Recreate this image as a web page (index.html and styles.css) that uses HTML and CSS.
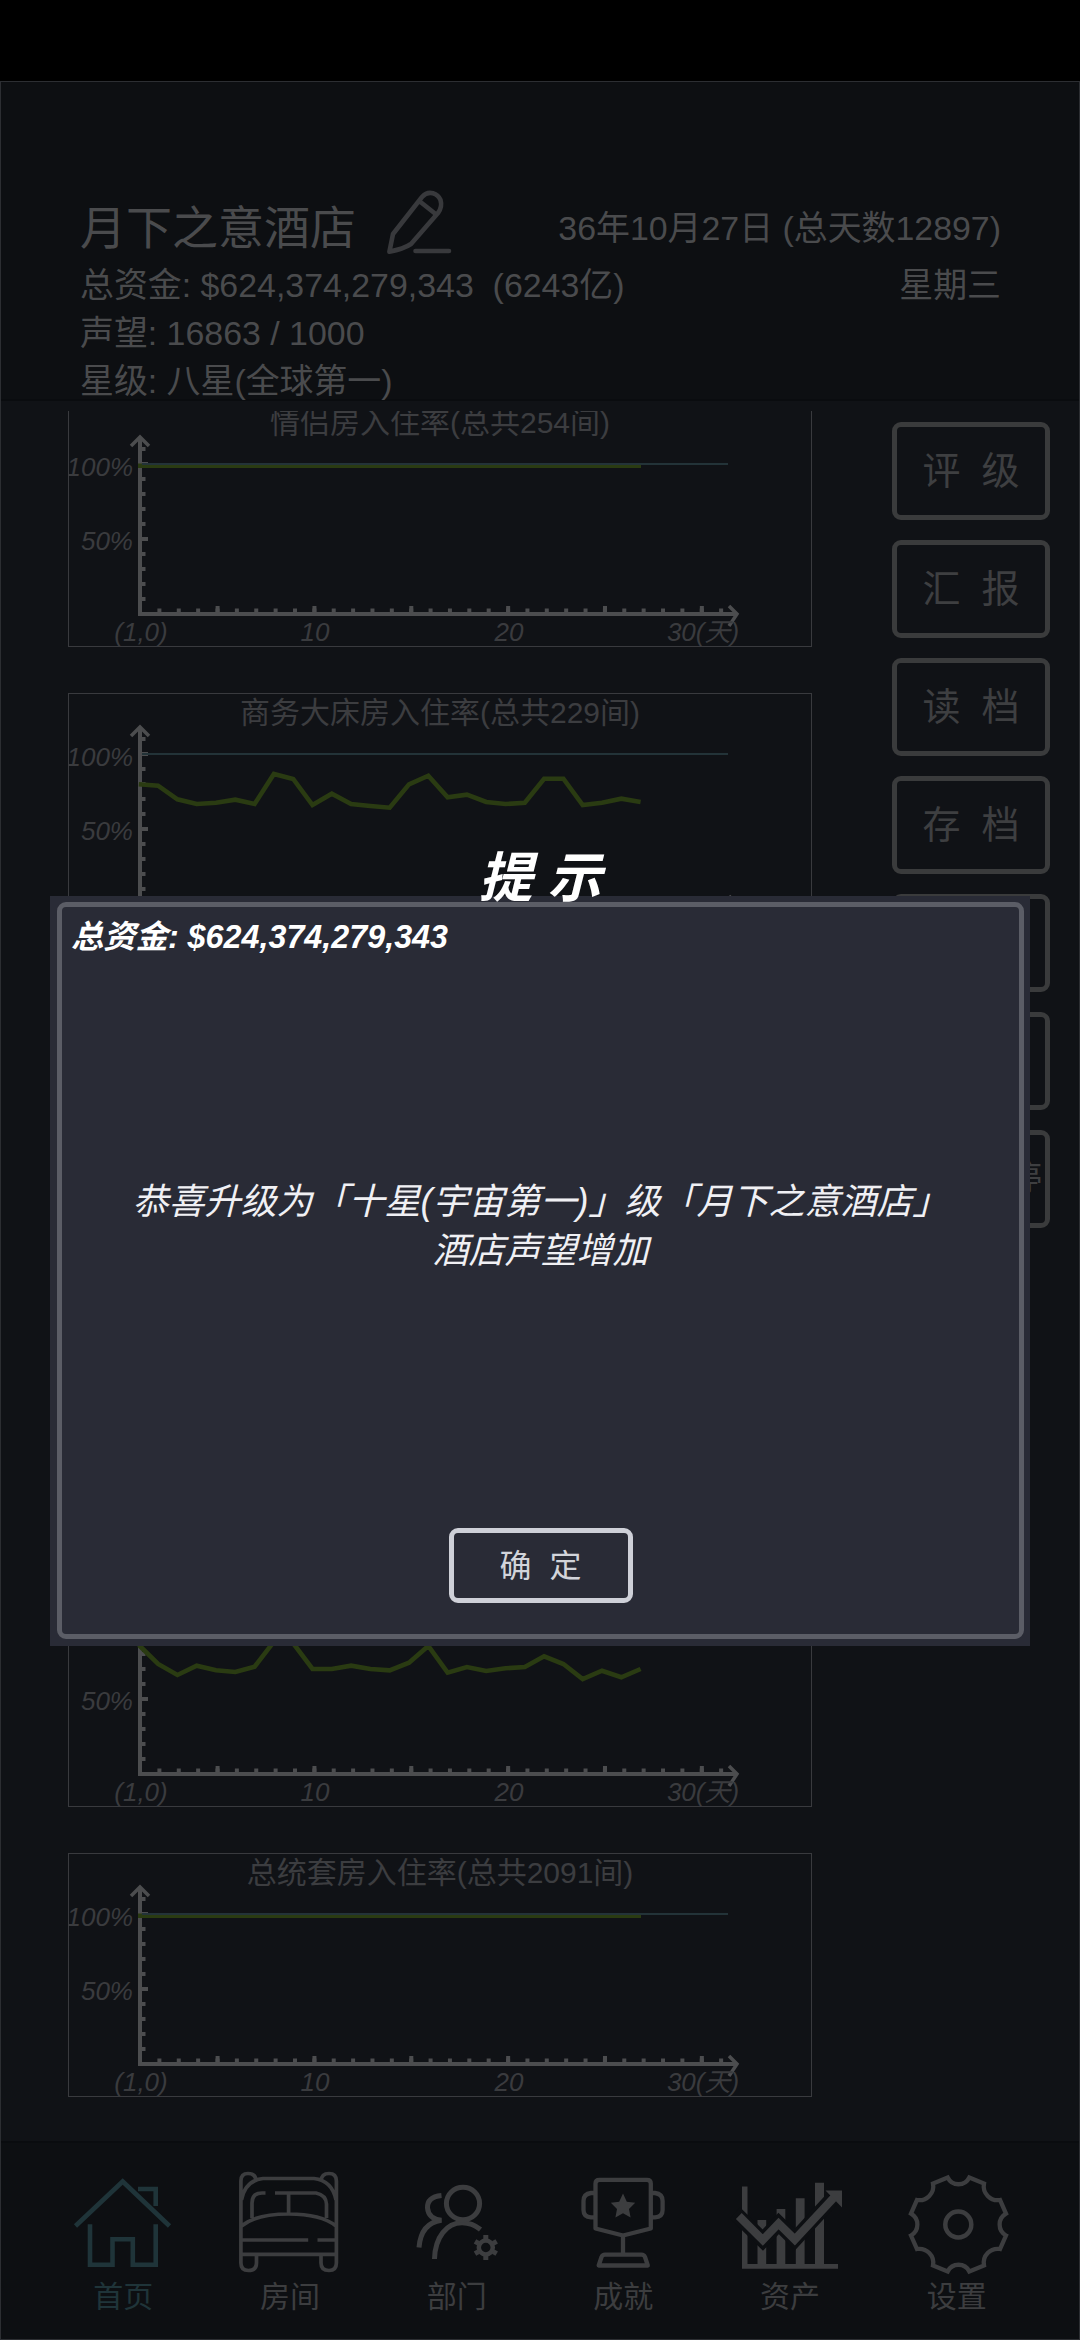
FILE: index.html
```html
<!DOCTYPE html>
<html lang="zh-CN">
<head>
<meta charset="utf-8">
<title>月下之意酒店</title>
<link rel="stylesheet" href="styles.css">
</head>
<body>
<svg class="defs" aria-hidden="true">
  <symbol id="axes" viewBox="0 0 744 244">
    <g class="axis">
      <path d="M72 213V35M70 211H669"/>
      <path d="M63 43L72 34L81 43M661 203L669 211L661 223" stroke-width="3.5"/>
      <path d="M75.5 198V44" stroke-width="4" stroke-dasharray="4 11"/>
      <path d="M74 136H80M74 61H80"/>
      <path d="M89.4 207.5H664" stroke-width="4" stroke-dasharray="4 15.37"/>
      <path d="M147.6 206H644" stroke-width="6" stroke-dasharray="4 92.85"/>
    </g>
  </symbol>
</svg>

<div class="app">
  <header class="header">
    <div class="row row-title">
      <h1 class="hotel">月下之意酒店</h1>
      <svg class="pencil" viewBox="0 0 75 75">
        <path d="M8.4 66.7L12 49L41 12C48 4 57 9 59.5 15C61 20 60 24 57 28L30 59C24 63 17 65 8.4 66.7ZM39.5 17L54 28.5M34.5 66H68"/>
      </svg>
      <span class="date">36年10月27日 (总天数12897)</span>
    </div>
    <div class="row"><span>总资金: $624,374,279,343&nbsp; (6243亿)</span><span>星期三</span></div>
    <div class="row">声望: 16863 / 1000</div>
    <div class="row">星级: 八星(全球第一)</div>
  </header>

  <main class="main">
    <section class="charts">
      <article class="chart">
        <h2>情侣房入住率(总共254间)</h2>
        <svg viewBox="0 0 744 244"><use href="#axes"/>
          <path class="rate" d="M70 62.7H573"/><path class="full" d="M74 61H660"/>
          <g class="label"><text x="65" y="73" class="end">100%</text><text x="65" y="147" class="end">50%</text><text x="73" y="238">(1,0)</text><text x="247" y="238">10</text><text x="441" y="238">20</text><text x="635" y="238">30(天)</text></g>
        </svg>
      </article>
      <article class="chart">
        <h2>商务大床房入住率(总共229间)</h2>
        <svg viewBox="0 0 744 244"><use href="#axes"/>
          <path class="full" d="M74 61H660"/>
          <polyline class="rate" points="70.8,91.3 90.1,92.7 109.4,106.3 128.7,111 148,109.7 167.3,106.7 186.6,111 205.9,81 225.2,86 244.5,112 263.8,100.7 283.1,111 302.4,113 321.7,114.7 341,91.3 360.3,82.7 379.6,104.3 398.9,101.7 418.2,109 437.5,111 456.8,109.7 476.1,85.7 495.4,85.7 514.7,112 534,109.7 553.3,105.7 572.6,109"/>
          <g class="label"><text x="65" y="73" class="end">100%</text><text x="65" y="147" class="end">50%</text></g>
        </svg>
      </article>
      <article class="chart"></article>
      <article class="chart"></article>
      <article class="chart">
        <svg viewBox="0 0 744 244"><use href="#axes"/>
          <polyline class="rate" points="70.8,82 90.1,101 109.4,112 128.7,102.7 148,107.3 167.3,109 186.6,103.7 205.9,78.7 225.2,80.3 244.5,106 263.8,106 283.1,102.7 302.4,106 321.7,107.3 341,99.7 360.3,83 379.6,109.7 398.9,104 418.2,108 437.5,105.3 456.8,104 476.1,93.3 495.4,101 514.7,116 534,107.7 553.3,114.3 572.6,106"/>
          <g class="label"><text x="65" y="147" class="end">50%</text><text x="73" y="238">(1,0)</text><text x="247" y="238">10</text><text x="441" y="238">20</text><text x="635" y="238">30(天)</text></g>
        </svg>
      </article>
      <article class="chart">
        <h2>总统套房入住率(总共2091间)</h2>
        <svg viewBox="0 0 744 244"><use href="#axes"/>
          <path class="rate" d="M70 62.7H573"/><path class="full" d="M74 61H660"/>
          <g class="label"><text x="65" y="73" class="end">100%</text><text x="65" y="147" class="end">50%</text><text x="73" y="238">(1,0)</text><text x="247" y="238">10</text><text x="441" y="238">20</text><text x="635" y="238">30(天)</text></g>
        </svg>
      </article>
    </section>
    <aside class="actions">
      <button>评&nbsp; 级</button>
      <button>汇&nbsp; 报</button>
      <button>读&nbsp; 档</button>
      <button>存&nbsp; 档</button>
      <button></button>
      <button></button>
      <button class="pause">停</button>
    </aside>
  </main>

  <nav class="nav">
    <a class="tab active">
      <svg viewBox="0 0 120 110"><path stroke-width="4.6" d="M12.5 61L59.7 16.5L106.5 61M75 24H92.7V41M27 59.3V99.7H49.5V74.3H69.8V99.7H92.7V59.3"/></svg>
      <span>首页</span>
    </a>
    <a class="tab">
      <svg viewBox="0 0 120 110"><path stroke-width="3.7" d="M10.9 97V16Q10.9 8.5 18 8.5Q25.7 8.5 26 16M91 16Q91.5 8.5 99 8.5Q106.4 8.5 106.4 16V97M11.5 35Q15 15.5 33 13.5H84Q102 15.5 106 35M10.9 89.3H106.4M10.9 89.3V98Q10.9 105.5 18.5 105.5Q26.5 105.5 26.5 98V89.3M91 89.3V98Q91 105.5 99 105.5Q106.4 105.5 106.4 98V89.3M10.9 75H78.2M87.5 75H106.4M11.5 61Q26 49 58.6 49Q91 49 106 61M22 53V38Q22 28 32 28H35.5M45 28H86Q96 30 96.5 39V53M58.6 28V49"/></svg>
      <span>房间</span>
    </a>
    <a class="tab">
      <svg viewBox="0 0 120 110"><path stroke-width="5" d="M44.5 30.5Q30 32 30.5 43Q31.5 54 44.5 55.3Q24 58 22 82.5M37.5 94C38 72 50 57.7 65 57.7C72 57.7 78 60 83.5 64.5"/><ellipse cx="66" cy="38.5" rx="16.6" ry="16.3" stroke-width="5"/><circle cx="88.8" cy="82.5" r="7" stroke-width="4.5"/><path stroke-width="5" d="M88.8 70V74M88.8 91V95M78 76.3L81.5 78.3M96.2 86.7L99.7 88.7M78 88.7L81.5 86.7M96.2 78.3L99.7 76.3"/></svg>
      <span>部门</span>
    </a>
    <a class="tab">
      <svg viewBox="0 0 120 110"><path stroke-width="4.3" stroke-linejoin="round" d="M36.5 14.8H84Q87.8 14.8 87.8 18.5V63.5L60 70.5L32.5 63.5V18.5Q32.5 14.8 36.5 14.8ZM32.5 28H28Q20.5 29 20.5 36V45Q20.5 52 28 52.3H32.5M87.8 28H92Q99.6 29 99.6 36V45Q99.6 52 92 52.3H87.8M60 71V89.5M42 89.7H78.5Q81 89.7 82 92L84.8 100.5H35.7L38.5 92Q39.5 89.7 42 89.7Z"/><path class="solid" d="M60 28.5L63.8 36.8L72.2 37.8L66 43.9L67.6 52.5L60 48.3L52.4 52.5L54 43.9L47.8 37.8L56.2 36.8Z"/></svg>
      <span>成就</span>
    </a>
    <a class="tab">
      <svg viewBox="0 0 120 110"><path class="solid" d="M12 21.5H17.5V99H108V103.7H12ZM27.5 55H36.2V100H27.5ZM46.6 44H55.3V100H46.6ZM65.8 33.3H74.6V100H65.8ZM85 17.7H94V100H85Z"/><path class="gap" d="M5 48L32.8 75L48.6 58.5L64.8 74.5L103 33"/><path stroke-width="8.2" d="M8.800 51L32.800 75L48.600 58.500L64.800 74.500L104 32.500"/><path class="solid" d="M95.500 25.500H112V42.500Z"/></svg>
      <span>资产</span>
    </a>
    <a class="tab">
      <svg viewBox="0 0 120 110"><path stroke-width="4.3" d="M50.7 12.5A12 12 0 0 0 72.3 12.5L87 18.5A14 14 0 0 0 103 35L109 48.7A12.5 12.5 0 0 0 109 70.5L103 84A14 14 0 0 0 87 100.5L72.3 106.5A12 12 0 0 0 50.7 106.5L36 100.5A14 14 0 0 0 20 84L14 70.5A12.5 12.5 0 0 0 14 48.7L20 35A14 14 0 0 0 36 18.5Z"/><circle cx="61.3" cy="59.5" r="13" stroke-width="4.5"/></svg>
      <span>设置</span>
    </a>
  </nav>

  <section class="dialog">
    <h2 class="dialog-title">提 示</h2>
    <div class="dialog-body">
      <p class="funds">总资金: $624,374,279,343</p>
      <p class="message">恭喜升级为「十星(宇宙第一)」级「月下之意酒店」<br>酒店声望增加</p>
      <button class="ok">确&nbsp; 定</button>
    </div>
  </section>
</div>
</body>
</html>
```
FILE: styles.css
```css
* { box-sizing: border-box; }

body {
  margin: 0;
  height: 2340px;
  padding-top: 81px;
  background: #000;
  font-family: "Liberation Sans", "Noto Sans CJK SC", sans-serif;
  overflow: hidden;
}

h1, h2, p { margin: 0; font-weight: 400; }

svg { display: block; fill: none; stroke: currentColor; }

.defs { position: absolute; width: 0; height: 0; }

.app {
  position: relative;
  display: flex;
  flex-direction: column;
  height: 2259px;
  border: 1px solid #2c2e32;
  background: #101216;
}

/* header */
.header {
  height: 319px;
  padding: 102px 78px 0 79px;
  background: #0d0f12;
  border-bottom: 2px solid #0a0c0f;
  color: #4a4b4d;
  font-size: 33.9px;
  line-height: 48px;
}

.row {
  display: flex;
  justify-content: space-between;
  height: 48px;
  white-space: nowrap;
}

.row-title { height: 77px; align-items: center; padding-top: 11px; }

.hotel { font-size: 46px; line-height: 60px; }

.pencil {
  width: 75px;
  height: 75px;
  margin: -12px auto 0 25px;
  color: #38393c;
  stroke-width: 4.6;
  stroke-linecap: round;
  stroke-linejoin: round;
}

/* scrolling content */
.main {
  flex: 1;
  display: flex;
  justify-content: space-between;
  padding: 10px 29px 0 67px;
  overflow: hidden;
}

.charts {
  display: flex;
  flex-direction: column;
  gap: 46px;
  width: 744px;
  height: 1700px;
  overflow: hidden;
}

.chart {
  flex: none;
  display: grid;
  height: 244px;
  box-shadow: inset 0 0 0 1px #393a3e;
}

.chart:first-child { margin-top: -8px; }

.chart > * { grid-area: 1 / 1; }

.chart h2 {
  color: #3c3d40;
  font-size: 30px;
  line-height: 40px;
  text-align: center;
}

.chart svg { width: 744px; height: 244px; }

.axis { stroke: #4c4d4f; stroke-width: 4; }
.rate { stroke: #2a3b12; stroke-width: 4.6; }
.full { stroke: #233338; stroke-width: 2; }

.label {
  fill: #3a3b3e;
  stroke: none;
  font-size: 26px;
  font-style: italic;
  text-anchor: middle;
}

.end { text-anchor: end; }

.actions {
  display: flex;
  flex-direction: column;
  gap: 20px;
  width: 158px;
  padding-top: 11px;
}

button {
  display: flex;
  align-items: center;
  justify-content: center;
  padding: 0;
  border: 5px solid #3a3b3c;
  border-radius: 9px;
  background: none;
  color: #3e3f41;
  font-family: inherit;
  font-size: 38px;
  white-space: nowrap;
}

.actions button { flex: none; height: 98px; padding-bottom: 7px; }

.actions .pause { justify-content: flex-end; padding-right: 3px; font-size: 34px; }

/* tabs */
.nav {
  display: grid;
  grid-template-columns: repeat(6, 1fr);
  height: 198px;
  padding: 22px 39px 0;
  background: #0d0f12;
  border-top: 2px solid #0a0c0f;
}

.tab {
  display: flex;
  flex-direction: column;
  align-items: center;
  gap: 2px;
  color: #3c3d3f;
  font-size: 30px;
  line-height: 40px;
}

.tab svg { width: 120px; height: 110px; }
.active { color: #1f3439; }
.solid { fill: currentColor; stroke: none; }
.gap { stroke: #0d0f12; stroke-width: 15; }

/* dialog */
.dialog {
  position: absolute;
  left: 49px;
  top: 814px;
  width: 980px;
  height: 750px;
  padding: 6px 6px 7px 7px;
  background: #292b36;
}

.dialog-title {
  position: absolute;
  left: 0;
  right: 0;
  top: -58px;
  color: #fff;
  font-size: 54px;
  font-style: italic;
  font-weight: 700;
  line-height: 80px;
  text-align: center;
}

.dialog-body {
  display: flex;
  flex-direction: column;
  align-items: center;
  height: 100%;
  padding: 6px 9px 31px;
  border: 5px solid #5b5d66;
  border-radius: 9px;
}

.funds {
  align-self: flex-start;
  color: #fff;
  font-size: 32.3px;
  font-style: italic;
  font-weight: 700;
  line-height: 48px;
}

.message {
  margin: 216px 0 auto;
  color: #f0f0f4;
  font-size: 36px;
  font-style: italic;
  line-height: 49px;
  text-align: center;
  white-space: nowrap;
}

.ok {
  width: 184px;
  height: 75px;
  padding-bottom: 6px;
  border-color: #ced0d8;
  color: #d2d4da;
  font-size: 32px;
}
```
